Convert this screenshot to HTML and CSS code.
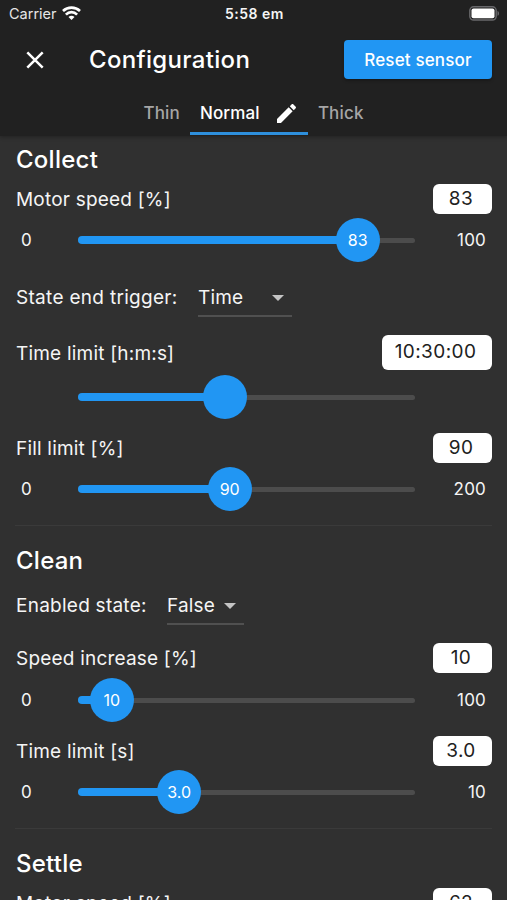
FILE: index.html
```html
<!DOCTYPE html>
<html lang="en">
<head>
<meta charset="utf-8">
<title>Configuration</title>
<link rel="stylesheet" href="styles.css">
</head>
<body>
<header class="header">
  <div class="status">
    <div class="carrier"><span>Carrier</span>
      <svg width="19" height="14" viewBox="0 0 19 14"><g fill="none" stroke="#fff" stroke-width="2.7"><path d="M1 5C5.800.6 13.200.6 18 5"/><path d="M3.900 8.600C7.100 5.400 11.900 5.400 15.100 8.600"/></g><path d="M6.500 11C8.200 9.300 10.800 9.300 12.500 11L9.500 14Z" fill="#fff"/></svg>
    </div>
    <span class="clock">5:58 em</span>
    <svg class="battery" width="31" height="15" viewBox="0 0 31 15"><rect x=".8" y=".8" width="26.400" height="13.200" rx="3.800" fill="none" stroke="#68686b" stroke-width="1.400"/><rect x="2.500" y="2.500" width="23" height="9.800" rx="2" fill="#fff"/><path d="M28.500 5c2 .6 2 4.200 0 4.800Z" fill="#68686b"/></svg>
  </div>
  <div class="toolbar">
    <svg class="close" width="18" height="18" viewBox="0 0 18 18"><path d="M1.300 1.300 16.700 16.700M16.700 1.300 1.300 16.700" stroke="#fff" stroke-width="2.500"/></svg>
    <h1 class="title">Configuration</h1>
    <button class="reset">Reset sensor</button>
  </div>
  <nav class="tabs">
    <span class="tab thin">Thin</span>
    <span class="tab active"><span>Normal</span><svg width="19" height="19" viewBox="3 3 18 18"><path fill="#fff" d="M3 17.250V21h3.750L17.810 9.940l-3.750-3.750L3 17.250zM20.710 7.040c.39-.39.39-1.020 0-1.410l-2.340-2.340c-.39-.39-1.020-.39-1.410 0l-1.830 1.830 3.750 3.750 1.830-1.830z"/></svg></span>
    <span class="tab thick">Thick</span>
  </nav>
</header>
<main>
  <section class="section">
    <h2>Collect</h2>
    <div class="field"><span class="label">Motor speed [%]</span><span class="value">83</span></div>
    <div class="slider"><span class="min">0</span><div class="track"><div class="fill" style="width:83%"><span class="thumb">83</span></div></div><span class="max">100</span></div>
    <div class="choice first"><span class="label">State end trigger:</span><span class="select wide"><span>Time</span><i class="arrow"></i></span></div>
    <div class="field tall"><span class="label">Time limit [h:m:s]</span><span class="value">10:30:00</span></div>
    <div class="slider"><span class="min"></span><div class="track"><div class="fill" style="width:43.75%"><span class="thumb"></span></div></div><span class="max"></span></div>
    <div class="field next"><span class="label">Fill limit [%]</span><span class="value">90</span></div>
    <div class="slider"><span class="min">0</span><div class="track"><div class="fill" style="width:45%"><span class="thumb">90</span></div></div><span class="max">200</span></div>
  </section>
  <section class="section">
    <h2>Clean</h2>
    <div class="choice second"><span class="label state">Enabled state:</span><span class="select"><span>False</span><i class="arrow"></i></span></div>
    <div class="field after"><span class="label">Speed increase [%]</span><span class="value">10</span></div>
    <div class="slider"><span class="min">0</span><div class="track"><div class="fill" style="width:10%"><span class="thumb">10</span></div></div><span class="max">100</span></div>
    <div class="field next"><span class="label">Time limit [s]</span><span class="value">3.0</span></div>
    <div class="slider"><span class="min">0</span><div class="track"><div class="fill" style="width:30%"><span class="thumb">3.0</span></div></div><span class="max">10</span></div>
  </section>
  <section class="section">
    <h2>Settle</h2>
    <div class="field"><span class="label">Motor speed [%]</span><span class="value">62</span></div>
  </section>
</main>
</body>
</html>
```
FILE: styles.css
```css
* { box-sizing: border-box; }
html, body { margin: 0; height: 900px; overflow: hidden; }
body { background: #303030; color: #f5f5f5; font-family: Inter, "Liberation Sans", sans-serif; }
h1, h2 { margin: 0; font-weight: 500; color: #fff; white-space: nowrap; }
span { white-space: nowrap; }
svg { display: block; flex: none; }

.header { height: 136px; background: #212121; box-shadow: 0 1px 4px rgba(0,0,0,.3); position: relative; }
.status { height: 27px; display: grid; grid-template-columns: 1fr auto 1fr; align-items: center; padding: 0 7px 0 9px; font-size: 14.5px; }
.carrier { display: flex; align-items: center; gap: 5px; color: #e6e6e6; }
.carrier svg { margin-bottom: 2px; }
.clock { font-weight: 600; font-size: 14px; letter-spacing: .5px; }
.battery { justify-self: end; margin-bottom: 1px; }
.toolbar { height: 64px; display: flex; align-items: center; padding: 1px 15px 0 26px; }
.title { margin-left: 45px; font-size: 24px; letter-spacing: .32px; }
.reset { margin-left: auto; width: 148px; height: 39px; border: 0; border-radius: 4px; background: #2196f3; color: #fff; font: 500 17px Inter, sans-serif; letter-spacing: .15px; padding: 0; box-shadow: 0 2px 3px rgba(0,0,0,.25); white-space: nowrap; }
.tabs { height: 45px; display: flex; justify-content: center; }
.tab { height: 44px; display: flex; align-items: center; font-size: 17px; font-weight: 500; letter-spacing: .15px; color: #a6a6a6; padding: 0 10px; }
.active { width: 118px; justify-content: space-between; padding: 3px 12px 0 10px; color: #fff; border-bottom: 3px solid #2e8fdc; }

.section { padding: 0 15px 0 16px; }
.section + .section { position: relative; margin-top: 14px; padding-top: 12px; }
.section + .section::before { content: ""; position: absolute; left: 15px; right: 15px; top: 0; height: 1px; background: #3a3a3a; }
h2 { height: 48px; line-height: 48px; font-size: 24px; letter-spacing: .25px; }
.field { height: 30px; margin-bottom: 4px; display: flex; align-items: center; justify-content: space-between; }
.field .label { padding-top: 2px; }
.label { font-size: 19px; letter-spacing: .2px; line-height: 30px; }
.value { width: 59px; height: 30px; border-radius: 6px; background: #fff; color: #212121; font-size: 19px; letter-spacing: .4px; line-height: 29px; text-align: center; padding-right: 3px; }
.tall { height: 35px; margin: 18px 0 5px; }
.tall .value { width: 110px; height: 35px; line-height: 34px; }
.next { margin-top: 14px; }
.after { margin-top: 18px; margin-bottom: 5px; }
.slider { height: 44px; display: grid; grid-template-columns: 62px 337px 1fr; align-items: center; font-size: 17px; }
.min { padding-left: 5px; }
.max { text-align: right; padding-right: 6px; letter-spacing: .2px; }
.track { height: 5px; border-radius: 3px; background: #4c4c4c; display: flex; align-items: center; }
.fill { height: 8px; border-radius: 4px; background: #2196f3; display: flex; align-items: center; justify-content: flex-end; }
.thumb { flex: none; width: 44px; height: 44px; margin-right: -22px; border-radius: 50%; background: #2196f3; color: #fff; font-size: 16px; line-height: 45px; text-align: center; }
.choice { height: 37px; display: flex; }
.choice .label { width: 182px; line-height: 35px; letter-spacing: .3px; }
.choice .state { width: 151px; letter-spacing: .25px; }
.first { margin-top: 18px; }
.second { margin-top: 3px; }
.select { width: 77px; height: 37px; display: flex; align-items: center; justify-content: space-between; padding-right: 8px; border-bottom: 2px solid #505050; font-size: 19px; letter-spacing: .15px; }
.wide { width: 94px; }
.arrow { border: 6px solid transparent; border-top-color: #c4c4c4; border-bottom: 0; }
```
